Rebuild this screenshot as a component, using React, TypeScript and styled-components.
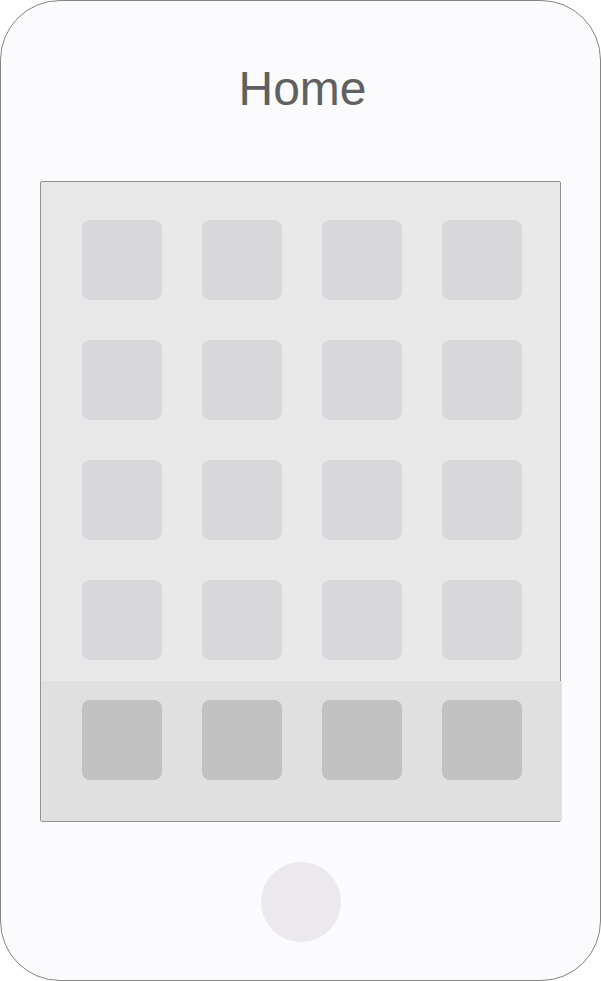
import styled, { createGlobalStyle } from 'styled-components';

const GlobalStyle = createGlobalStyle`
  body {
    margin: 0;
    background: #ffffff;
    font-family: 'Liberation Sans', Arial, sans-serif;
  }
`;

const Phone = styled.div`
  box-sizing: border-box;
  width: 601px;
  height: 981px;
  border: 1px solid #858585;
  border-radius: 60px;
  background: #fbfafc;
  display: flex;
  flex-direction: column;
  align-items: center;
`;

const Header = styled.div`
  height: 180px;
  width: 100%;
  display: flex;
  justify-content: center;
`;

const Title = styled.h1`
  margin: 0;
  padding-top: 64px;
  padding-left: 4px;
  font-size: 48px;
  line-height: 48px;
  font-weight: 400;
  color: #606060;
`;

const Screen = styled.div`
  box-sizing: border-box;
  width: 521px;
  height: 641px;
  border: 1px solid #929292;
  border-radius: 2px;
  background: #e8e8e8;
  display: flex;
  flex-direction: column;
`;

const IconGrid = styled.div`
  display: grid;
  grid-template-columns: repeat(4, 80px);
  grid-auto-rows: 80px;
  gap: 40px;
  padding: 38px 0 0 41px;
`;

const Dock = styled.div`
  margin: 21px -2px 0 0;
  height: 140px;
  box-sizing: border-box;
  padding: 19px 0 0 41px;
  background: #e0e0e0;
  border-bottom-right-radius: 3px;
  display: grid;
  grid-template-columns: repeat(4, 80px);
  grid-auto-rows: 80px;
  gap: 40px;
`;

const AppIcon = styled.div<{ $docked?: boolean }>`
  width: 80px;
  height: 80px;
  border-radius: 8px;
  background: ${(p) => (p.$docked ? '#c1c1c1' : '#d8d8da')};
`;

const HomeButton = styled.div`
  margin-top: 40px;
  width: 80px;
  height: 80px;
  border-radius: 50%;
  background: #ebe9ec;
`;

export default function App() {
  return (
    <>
      <GlobalStyle />
      <Phone>
        <Header>
          <Title>Home</Title>
        </Header>
        <Screen>
          <IconGrid>
            {Array.from({ length: 16 }, (_, i) => (
              <AppIcon key={i} />
            ))}
          </IconGrid>
          <Dock>
            {Array.from({ length: 4 }, (_, i) => (
              <AppIcon key={i} $docked />
            ))}
          </Dock>
        </Screen>
        <HomeButton />
      </Phone>
    </>
  );
}
